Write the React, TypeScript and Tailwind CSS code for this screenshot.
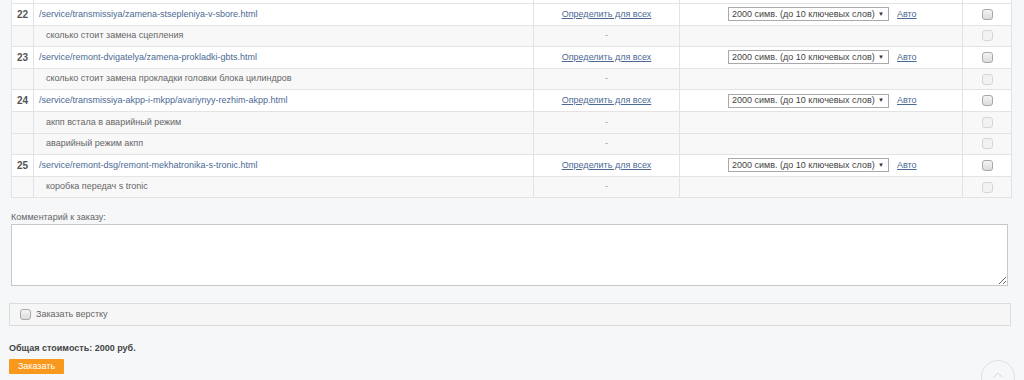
import { ChevronUp } from "lucide-react";

type Row = { n: number; url: string; keys: string[] };

const rows: Row[] = [
	{ n: 22, url: "/service/transmissiya/zamena-stsepleniya-v-sbore.html", keys: ["сколько стоит замена сцепления"] },
	{ n: 23, url: "/service/remont-dvigatelya/zamena-prokladki-gbts.html", keys: ["сколько стоит замена прокладки головки блока цилиндров"] },
	{
		n: 24,
		url: "/service/transmissiya-akpp-i-mkpp/avariynyy-rezhim-akpp.html",
		keys: ["акпп встала в аварийный режим", "аварийный режим акпп"],
	},
	{ n: 25, url: "/service/remont-dsg/remont-mekhatronika-s-tronic.html", keys: ["коробка передач s tronic"] },
];

const Box = ({ disabled }: { disabled?: boolean }) => (
	<span
		className={
			disabled
				? "block w-[11px] h-[11px] rounded-[3px] border border-[#d6d6d6] bg-[#f2f2f2]"
				: "block w-[11px] h-[11px] rounded-[3px] border border-[#a8a8a8] bg-gradient-to-b from-[#f4f4f4] to-[#dcdcdc]"
		}
	/>
);

const cell = "border-r border-[#e3e3e3] flex items-center";

const MainRow = ({ r }: { r: Row }) => (
	<div className="grid grid-cols-[22px_500px_146px_283px_1fr] h-[21.6px] bg-white border-b border-[#e3e3e3]">
		<div className={`${cell} justify-center font-bold text-[#555] text-[10px]`}>{r.n}</div>
		<div className={`${cell} pl-[5px]`}>
			<a className="text-[#4c6a94]">{r.url}</a>
		</div>
		<div className={`${cell} justify-center`}>
			<a className="text-[#4c6a94] underline">Определить для всех</a>
		</div>
		<div className={`${cell} pl-[48px]`}>
			<div className="w-[161px] h-[14px] border border-[#a9a9a9] bg-white flex items-center justify-between pl-[3px] pr-[4px] text-[#444]">
				<span>2000 симв. (до 10 ключевых слов)</span>
				<span className="text-[6px] text-[#333]">▼</span>
			</div>
			<a className="ml-[8px] text-[#4c6a94] underline">Авто</a>
		</div>
		<div className="flex items-center justify-center">
			<Box />
		</div>
	</div>
);

const SubRow = ({ text }: { text: string }) => (
	<div className="grid grid-cols-[22px_500px_146px_283px_1fr] h-[21.6px] bg-[#f8f8f8] border-b border-[#e3e3e3]">
		<div className={cell} />
		<div className={`${cell} pl-[12px] text-[#666]`}>{text}</div>
		<div className={`${cell} justify-center text-[#999]`}>-</div>
		<div className={cell} />
		<div className="flex items-center justify-center">
			<Box disabled />
		</div>
	</div>
);

export default function App() {
	return (
		<div className="relative h-[380px] overflow-hidden bg-[#f5f7f9] font-['Liberation_Sans',Arial,sans-serif] text-[9px] text-[#555]">
			<div className="ml-[11px] w-[1001px] border-l border-r border-[#e3e3e3]">
				<div className="grid grid-cols-[22px_500px_146px_283px_1fr] h-[4px] bg-white border-b border-[#e3e3e3]">
					<div className={cell} />
					<div className={cell} />
					<div className={cell} />
					<div className={cell} />
					<div />
				</div>
				{rows.map((r) => (
					<div key={r.n}>
						<MainRow r={r} />
						{r.keys.map((k) => (
							<SubRow key={k} text={k} />
						))}
					</div>
				))}
			</div>

			<div className="ml-[11px] mt-[14px] leading-[10px] text-[#666]">Комментарий к заказу:</div>
			<textarea className="block ml-[11px] mt-[2px] w-[997px] h-[62px] border border-[#c8c8c8] bg-white resize" />

			<div className="ml-[9px] mt-[17px] w-[1002px] h-[23px] border border-[#dcdcdc] bg-[#f6f6f6] flex items-center pl-[10px] gap-[5px] text-[#666]">
				<Box />
				<span>Заказать верстку</span>
			</div>

			<div className="ml-[9px] mt-[17px] leading-[10px] font-bold text-[#444]">Общая стоимость: 2000 руб.</div>
			<button className="block ml-[9px] mt-[6px] w-[55px] h-[15px] bg-[#f8991d] text-white text-[9px] rounded-[1px]">
				Заказать
			</button>

			<div className="absolute left-[981px] top-[360px] w-[34px] h-[34px] rounded-full border border-[#dde1e5] flex justify-center pt-[6px]">
				<ChevronUp className="w-[16px] h-[16px] text-[#d5d9dd]" strokeWidth={1.5} />
			</div>
		</div>
	);
}
